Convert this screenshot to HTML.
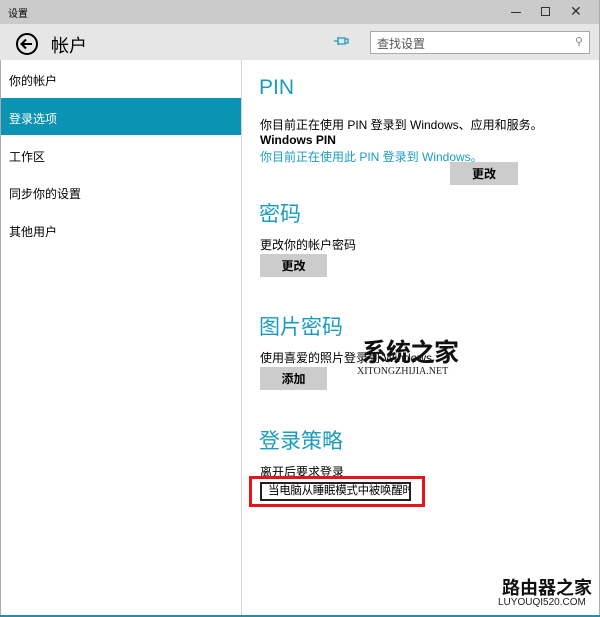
<!DOCTYPE html>
<html><head><meta charset="utf-8"><style>
*{margin:0;padding:0;box-sizing:border-box}
body{width:600px;height:617px;overflow:hidden;background:#fff;font-family:"Liberation Sans","Noto Sans CJK SC",sans-serif;position:relative;color:#000}
.a{position:absolute}
.t{font-size:12px}
.h{color:#1a9cc0;font-size:21px}
.btn{background:#ccc;font-size:12px;font-weight:bold;text-align:center;line-height:24px}
</style></head><body>
<div class="a" style="left:0;top:0;width:600px;height:24px;background:#cbcbcb"></div>
<div class="a t" style="left:8px;top:5px;font-size:10px">设置</div>
<div class="a" style="left:511px;top:12px;width:10px;height:1px;background:#333"></div>
<div class="a" style="left:541px;top:7px;width:9px;height:9px;border:1px solid #333"></div>
<div class="a" style="left:570px;top:3px;font-size:14px;color:#333">✕</div>
<div class="a" style="left:0;top:24px;width:600px;height:36px;background:#e6e6e6"></div>
<svg class="a" style="left:13px;top:30px" width="28" height="28"><circle cx="14" cy="14" r="10" fill="none" stroke="#000" stroke-width="2"/><path d="M19 14H9M13 9.5L8.5 14 13 18.5" fill="none" stroke="#000" stroke-width="2"/></svg>
<div class="a" style="left:51px;top:32px;font-size:18px">帐户</div>
<svg class="a" style="left:333px;top:35px" width="16" height="12"><path d="M1 6H5M5 2V10M5 3H12V9H5M12 4H15V8H12" fill="none" stroke="#1a9cc0" stroke-width="1.3"/></svg>
<div class="a" style="left:370px;top:31px;width:220px;height:23px;background:#fff;border:1px solid #aaa"></div>
<div class="a t" style="left:377px;top:35px;color:#555">查找设置</div>
<div class="a" style="left:575px;top:35px;font-size:11px;color:#888">⚲</div>
<div class="a" style="left:241px;top:60px;width:1px;height:557px;background:#d4d4d4"></div>
<div class="a" style="left:0;top:60px;width:1px;height:557px;background:#aaa"></div>
<div class="a" style="left:599px;top:0;width:1px;height:617px;background:#aaa"></div>
<div class="a" style="left:0;top:615px;width:600px;height:2px;background:#2a8aa8"></div>
<div class="a t" style="left:9px;top:72px">你的帐户</div>
<div class="a" style="left:1px;top:98px;width:240px;height:37px;background:#0b93b3"></div>
<div class="a t" style="left:9px;top:110px;color:#fff">登录选项</div>
<div class="a t" style="left:9px;top:148px">工作区</div>
<div class="a t" style="left:9px;top:185px">同步你的设置</div>
<div class="a t" style="left:9px;top:223px">其他用户</div>
<div class="a h" style="left:259px;top:76px">PIN</div>
<div class="a t" style="left:260px;top:116px">你目前正在使用 PIN 登录到 Windows、应用和服务。</div>
<div class="a t" style="left:260px;top:133px;font-weight:bold">Windows PIN</div>
<div class="a t" style="left:260px;top:148px;color:#1a9cc0">你目前正在使用此 PIN 登录到 Windows。</div>
<div class="a btn" style="left:450px;top:162px;width:68px;height:23px">更改</div>
<div class="a h" style="left:259px;top:198px">密码</div>
<div class="a t" style="left:260px;top:236px">更改你的帐户密码</div>
<div class="a btn" style="left:260px;top:254px;width:67px;height:23px">更改</div>
<div class="a h" style="left:259px;top:311px">图片密码</div>
<div class="a t" style="left:260px;top:349px">使用喜爱的照片登录到 Windows</div>
<div class="a btn" style="left:260px;top:367px;width:67px;height:23px">添加</div>
<div class="a" style="left:362px;top:333px;font-size:25px;font-weight:bold;color:#111;font-family:'Noto Sans CJK SC',sans-serif;letter-spacing:-1px">系统之家</div>
<div class="a" style="left:357px;top:366px;font-size:10px;font-family:'Liberation Serif',serif;color:#222">XITONGZHIJIA.NET</div>
<div class="a h" style="left:259px;top:425px">登录策略</div>
<div class="a t" style="left:260px;top:463px">离开后要求登录</div>
<div class="a" style="left:249px;top:476px;width:176px;height:31px;border:3px solid #e8131a"></div>
<div class="a" style="left:260px;top:482px;width:151px;height:19px;border:2px solid #222;padding-left:6px;line-height:15px;white-space:nowrap;overflow:hidden;font-size:11.5px;letter-spacing:-0.3px">当电脑从睡眠模式中被唤醒时</div>
<div class="a" style="left:502px;top:574px;font-size:18px;font-weight:bold;color:#111;font-family:'Noto Sans CJK SC',sans-serif">路由器之家</div>
<div class="a" style="left:498px;top:597px;font-size:10px;color:#222">LUYOUQI520.COM</div>
</body></html>
